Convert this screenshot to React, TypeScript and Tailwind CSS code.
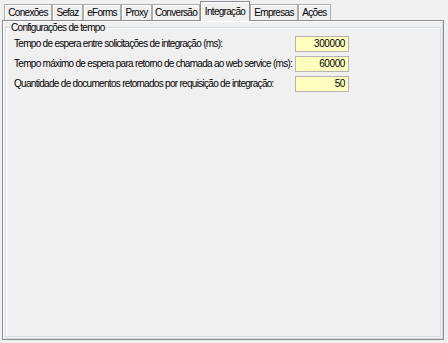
import React from 'react';

const tabs = [
  { label: 'Conexões', w: 'w-[48px]' },
  { label: 'Sefaz', w: 'w-[31px]' },
  { label: 'eForms', w: 'w-[38px]' },
  { label: 'Proxy', w: 'w-[31px]' },
  { label: 'Conversão', w: 'w-[48px]' },
  { label: 'Integração', w: 'w-[50px]', active: true },
  { label: 'Empresas', w: 'w-[48px]' },
  { label: 'Ações', w: 'w-[33px]' },
];

const rows = [
  { label: 'Tempo de espera entre solicitações de integração (ms):', value: '300000' },
  { label: 'Tempo máximo de espera para retorno de chamada ao web service (ms):', value: '60000' },
  { label: 'Quantidade de documentos retornados por requisição de integração:', value: '50' },
];

export default function App() {
  return (
    <div
      className="w-[448px] h-[343px] bg-[#f0f0f0] text-[10px] leading-[12px] tracking-[-0.7px] text-black pt-[1px] pl-[2px] flex flex-col whitespace-nowrap"
      style={{ fontFamily: '"Liberation Sans", Arial, sans-serif' }}
    >
      {/* abas */}
      <div className="flex items-end h-[19px] pl-[2px] relative z-10">
        {tabs.map((t) =>
          t.active ? (
            <div
              key={t.label}
              className={`${t.w} h-[20px] mb-[-1px] bg-[#f0f0f0] border border-b-0 border-[#898c95] shadow-[inset_1px_1px_0_#ffffff] flex items-center justify-center`}
            >
              {t.label}
            </div>
          ) : (
            <div
              key={t.label}
              className={`${t.w} h-[16px] bg-[#f0f0f0] border border-b-0 border-[#acacac] shadow-[inset_1px_1px_0_#ffffff] flex items-center justify-center`}
            >
              {t.label}
            </div>
          )
        )}
      </div>

      {/* painel */}
      <div className="w-[442px] h-[320px] border border-[#898c95] shadow-[inset_1px_1px_0_#ffffff,inset_-1px_-1px_0_#d9d9d9] px-[2px] pt-[1px]">
        {/* grupo */}
        <div className="relative mt-[5px] h-[310px] border border-[#d5dfe5] shadow-[inset_1px_1px_0_#ffffff]">
          <span className="absolute left-[4px] top-[-6px] px-[1px] bg-[#f0f0f0]">
            Configurações de tempo
          </span>
          <div className="flex flex-col gap-[4px] pt-[8px] pl-[8px]">
            {rows.map((r) => (
              <div key={r.label} className="flex items-center h-[16px]">
                <span className="w-[281px]">{r.label}</span>
                <div className="w-[54px] h-[16px] bg-[#ffffc0] border border-[#b4b4b4] text-right pr-[3px] leading-[14px] tracking-[-0.4px]">
                  {r.value}
                </div>
              </div>
            ))}
          </div>
        </div>
      </div>
    </div>
  );
}
